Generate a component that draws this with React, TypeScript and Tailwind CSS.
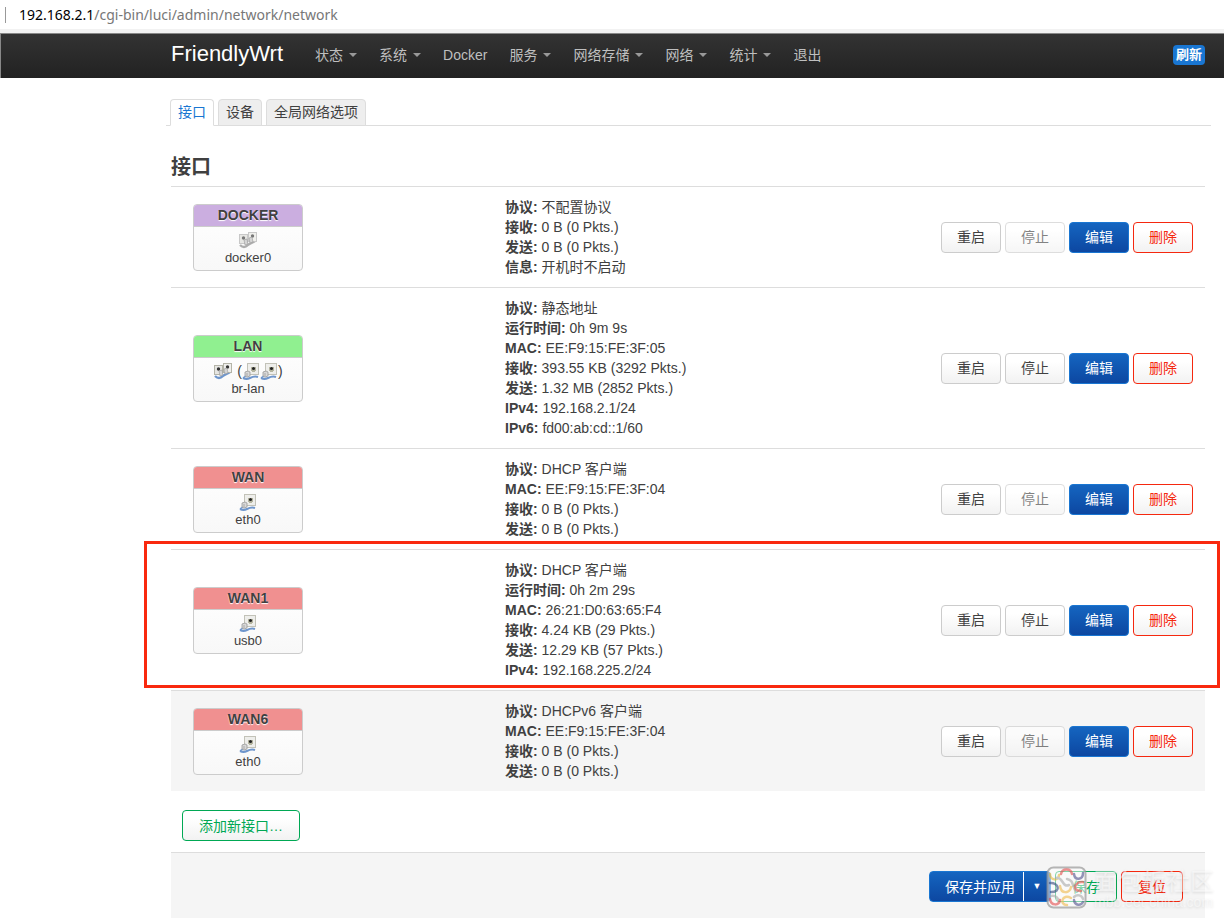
import type { ReactNode } from 'react';
import clsx from 'clsx';

interface Device {
  kind: 'ethernet' | 'bridge';
  disabled?: boolean;
}

interface NetworkInterface {
  name: string;
  device: string;
  zone: 'docker' | 'lan' | 'wan';
  icon: Device;
  members?: Device[];
  canStop: boolean;
  marked?: boolean;
  shaded?: boolean;
  details: [string, string][];
}

const menu = [
  { label: '状态', dropdown: true },
  { label: '系统', dropdown: true },
  { label: 'Docker', dropdown: false },
  { label: '服务', dropdown: true },
  { label: '网络存储', dropdown: true },
  { label: '网络', dropdown: true },
  { label: '统计', dropdown: true },
  { label: '退出', dropdown: false },
];

const tabs = ['接口', '设备', '全局网络选项'];

const interfaces: NetworkInterface[] = [
  {
    name: 'DOCKER',
    device: 'docker0',
    zone: 'docker',
    icon: { kind: 'bridge', disabled: true },
    canStop: false,
    details: [
      ['协议', '不配置协议'],
      ['接收', '0 B (0 Pkts.)'],
      ['发送', '0 B (0 Pkts.)'],
      ['信息', '开机时不启动'],
    ],
  },
  {
    name: 'LAN',
    device: 'br-lan',
    zone: 'lan',
    icon: { kind: 'bridge' },
    members: [{ kind: 'ethernet' }, { kind: 'ethernet' }],
    canStop: true,
    details: [
      ['协议', '静态地址'],
      ['运行时间', '0h 9m 9s'],
      ['MAC', 'EE:F9:15:FE:3F:05'],
      ['接收', '393.55 KB (3292 Pkts.)'],
      ['发送', '1.32 MB (2852 Pkts.)'],
      ['IPv4', '192.168.2.1/24'],
      ['IPv6', 'fd00:ab:cd::1/60'],
    ],
  },
  {
    name: 'WAN',
    device: 'eth0',
    zone: 'wan',
    icon: { kind: 'ethernet' },
    canStop: false,
    details: [
      ['协议', 'DHCP 客户端'],
      ['MAC', 'EE:F9:15:FE:3F:04'],
      ['接收', '0 B (0 Pkts.)'],
      ['发送', '0 B (0 Pkts.)'],
    ],
  },
  {
    name: 'WAN1',
    device: 'usb0',
    zone: 'wan',
    icon: { kind: 'ethernet' },
    canStop: true,
    marked: true,
    details: [
      ['协议', 'DHCP 客户端'],
      ['运行时间', '0h 2m 29s'],
      ['MAC', '26:21:D0:63:65:F4'],
      ['接收', '4.24 KB (29 Pkts.)'],
      ['发送', '12.29 KB (57 Pkts.)'],
      ['IPv4', '192.168.225.2/24'],
    ],
  },
  {
    name: 'WAN6',
    device: 'eth0',
    zone: 'wan',
    icon: { kind: 'ethernet' },
    canStop: false,
    shaded: true,
    details: [
      ['协议', 'DHCPv6 客户端'],
      ['MAC', 'EE:F9:15:FE:3F:04'],
      ['接收', '0 B (0 Pkts.)'],
      ['发送', '0 B (0 Pkts.)'],
    ],
  },
];

const zoneColors = {
  docker: 'bg-[#cbaee0]',
  lan: 'bg-[#90f090]',
  wan: 'bg-[#f09090]',
};

const buttonStyles = {
  neutral: 'border-[#ccc] bg-linear-to-b from-white from-25% to-[#f2f2f2] text-[#404040]',
  primary: 'border-[#1976d2] bg-linear-to-b from-[#1565c0] to-[#0d47a1] text-white',
  negative: 'border-[#f5280f] bg-linear-to-b from-white from-25% to-[#f2f2f2] text-[#f5280f]',
  positive: 'border-[#00a854] bg-linear-to-b from-white from-25% to-[#f2f2f2] text-[#00a854]',
};

function Button({
  kind = 'neutral',
  disabled,
  compact,
  clear,
  children,
}: {
  kind?: keyof typeof buttonStyles;
  disabled?: boolean;
  compact?: boolean;
  clear?: boolean;
  children: ReactNode;
}) {
  return (
    <button
      type="button"
      disabled={disabled}
      className={clsx(
        'h-[31px] rounded border text-sm whitespace-nowrap disabled:opacity-65',
        compact ? 'px-[15px]' : 'px-4',
        buttonStyles[kind],
        clear && 'bg-none',
      )}
    >
      {children}
    </button>
  );
}

function DeviceIcon({ kind, disabled }: Device) {
  const cable = disabled ? '#adadad' : '#6f96cc';
  const shade = disabled ? '#c8c8c8' : '#b4b4a8';

  if (kind === 'bridge') {
    return (
      <svg width="20" height="18" viewBox="0 0 20 18" fill="none" aria-hidden="true">
        <path d="M2 14c3 3 6 2 8 0s4-2 7-4" stroke={cable} strokeWidth="2.4" />
        <rect x="10.5" y="1.5" width="8" height="9" fill="#efefec" stroke={shade} />
        <rect x="1.5" y="3.5" width="8" height="9" fill="#e6e6e3" stroke={shade} />
        <circle cx="14.5" cy="5" r="1.7" fill={disabled ? '#777' : '#333'} />
        <circle cx="5.5" cy="7" r="1.7" fill={disabled ? '#777' : '#333'} />
        <path d="M6 9l3-1 1 5-3 1zM11 7l3-1 1 5-3 1z" fill="#d4d4d4" stroke="#999" strokeWidth=".6" />
      </svg>
    );
  }

  return (
    <svg width="18" height="18" viewBox="0 0 18 18" fill="none" aria-hidden="true">
      <rect x="5.5" y="1.5" width="11" height="11" fill="#eeeeeb" stroke="#c2c2b8" />
      <path d="M9 5h5v4h-1v1h-3V9H9z" fill="#b5b5a0" />
      <circle cx="11.5" cy="6.5" r="1.5" fill="#222" />
      <path d="M1 16c2 1 5 1 7 0s5-2 8-1" stroke={cable} strokeWidth="2" />
      <path d="M1 16l4-3" stroke={cable} strokeWidth="1.5" />
      <path d="M3 10l3-1 2 1v4l-3 1-2-1z" fill="#d8d8d8" stroke="#999" strokeWidth=".8" />
      <path d="M5 11v3" stroke="#999" strokeWidth=".7" />
    </svg>
  );
}

function InterfaceBadge({ iface }: { iface: NetworkInterface }) {
  return (
    <div className="ml-3 w-[110px] overflow-hidden rounded border border-[#ccc] bg-linear-to-b from-white to-[#f8f8f8] text-center">
      <div
        className={clsx(
          'h-[22px] border-b border-[#ccc] text-sm font-bold leading-[21px] [text-shadow:0_1px_1px_white]',
          zoneColors[iface.zone],
        )}
      >
        {iface.name}
      </div>
      <div className="h-[43px] pt-1 text-[13px]">
        <div className="flex h-[18px] items-center justify-center text-sm">
          <DeviceIcon {...iface.icon} />
          {iface.members && (
            <span className="ml-1 flex items-center">
              (
              {iface.members.map((member, i) => (
                <DeviceIcon key={i} {...member} />
              ))}
              )
            </span>
          )}
        </div>
        <div className="leading-[18px]">{iface.device}</div>
      </div>
    </div>
  );
}

function InterfaceRow({ iface }: { iface: NetworkInterface }) {
  return (
    <tr className={clsx('relative border-t border-[#ddd]', iface.shaded && 'bg-[#f5f5f5]')}>
      <td className="w-[324px] p-[10px]">
        <InterfaceBadge iface={iface} />
        {iface.marked && (
          <span className="pointer-events-none absolute -top-[10px] -right-[15px] bottom-[3px] -left-[27px] border-3 border-[#f9290f]" />
        )}
      </td>
      <td className="p-[10px] text-sm leading-5">
        {iface.details.map(([label, value]) => (
          <div key={label}>
            <strong>{label}:</strong> {value}
          </div>
        ))}
      </td>
      <td className="py-[10px] pr-3 pl-[10px]">
        <div className="flex justify-end gap-1">
          <Button compact>重启</Button>
          <Button compact disabled={!iface.canStop}>停止</Button>
          <Button compact kind="primary">编辑</Button>
          <Button compact kind="negative">删除</Button>
        </div>
      </td>
    </tr>
  );
}

function Watermark() {
  return (
    <div className="pointer-events-none absolute top-[13px] -right-[9px] flex items-center gap-1.5">
      <svg width="42" height="44" viewBox="0 0 42 44" fill="none" aria-hidden="true">
        <rect x="1.5" y="1.5" width="38" height="40" rx="6" fill="#fff" fillOpacity=".5" stroke="#999" strokeOpacity=".7" strokeWidth="2" />
        <g strokeWidth="2.5" strokeLinecap="round" opacity=".6">
          <path d="M4 8c0 7 9 7 9 1" stroke="#e8bc3c" />
          <path d="M15 8c1-6 10-6 11 0" stroke="#e34b4b" />
          <path d="M28 8c1 7 9 6 9-1" stroke="#50508c" />
          <path d="M4 17c8-1 12 9 1 9" stroke="#34487c" />
          <path d="M10 12c7-2 6 10 13 7" stroke="#aaa" />
          <path d="M21 13c7 1 5 8 9 12" stroke="#aaa" />
          <path d="M37 16c-8-1-12 9-2 9" stroke="#e34b4b" />
          <path d="M14 20c1 8 10 8 11 1" stroke="#f0b94a" />
          <path d="M5 30c5-1 8 3 8 6" stroke="#aaa" />
          <path d="M4 33c1 7 9 7 10 1" stroke="#e34b4b" />
          <path d="M25 32c-9-5-12 7-4 7" stroke="#f0b94a" />
          <path d="M28 31c3-3 8-2 9 2" stroke="#aaa" />
          <path d="M28 34c1 6 7 6 9 2" stroke="#50508c" />
        </g>
      </svg>
      <div className="text-white/50 [text-shadow:0_1px_3px_rgba(0,0,0,0.12)]">
        <div className="text-2xl leading-7">面包板社区</div>
        <div className="text-sm leading-3">mbb.eet-china.com</div>
      </div>
    </div>
  );
}

export default function App() {
  return (
    <div className="bg-white font-['Liberation_Sans','Noto_Sans_CJK_SC',sans-serif] text-sm text-[#404040]">
      {/* Address bar */}
      <div className="flex h-[29px] items-center pl-[5px] font-['Noto_Sans',sans-serif] text-sm text-[#777]">
        <span className="mr-[13px] h-4 w-px bg-[#999]" />
        <span>
          <span className="text-black">192.168.2.1</span>/cgi-bin/luci/admin/network/network
        </span>
      </div>
      <div className="h-1 bg-[#f2f2f2]" />

      <header className="flex h-[45px] items-center border-t border-l border-[#888] bg-linear-to-b from-[#333] to-[#222] pr-[19px] pb-0.5 pl-[170px] text-[#bfbfbf]">
        <a href="#" className="mr-8 pb-0.5 text-[22px] leading-8 text-white">
          FriendlyWrt
        </a>
        <nav className="flex gap-[22px]">
          {menu.map((item) => (
            <a key={item.label} href="#" className="flex items-center whitespace-nowrap">
              {item.label}
              {item.dropdown && (
                <span className="ml-1.5 border-x-4 border-t-4 border-x-transparent border-t-[#999]" />
              )}
            </a>
          ))}
        </nav>
        <button type="button" className="ml-auto h-5 rounded bg-[#1976d2] px-[3px] text-[13px] leading-5 font-bold text-white">
          刷新
        </button>
      </header>

      <main className="pr-[19px] pl-[171px]">
        <div className="-mr-1.5 -ml-[5px] mt-[21px] flex gap-1 border-b border-[#ddd] pl-1">
          {tabs.map((tab, i) => (
            <a
              key={tab}
              href="#"
              className={clsx(
                '-mb-px h-[27px] rounded-t border px-[7px] leading-[25px]',
                i === 0
                  ? 'border-[#ddd] border-b-white bg-white text-[#1976d2]'
                  : 'border-[#ddd] bg-[#eee]',
              )}
            >
              {tab}
            </a>
          ))}
        </div>

        <h2 className="pt-6 pb-0.5 text-xl leading-[34px] font-bold">接口</h2>

        <table className="w-full border-collapse">
          <tbody>
            {interfaces.map((iface) => (
              <InterfaceRow key={iface.name} iface={iface} />
            ))}
          </tbody>
        </table>

        <div className="flex px-[11px] pt-[19px] pb-[11px]">
          <Button kind="positive">添加新接口…</Button>
        </div>

        <footer className="relative flex justify-end gap-1 border-t border-[#ddd] bg-[#f5f5f5] pt-[18px] pr-[22px] pb-4">
          <div className="flex h-[31px] overflow-hidden rounded border border-[#1976d2] bg-linear-to-b from-[#1565c0] to-[#0d47a1] text-white">
            <button type="button" className="border-r border-white pr-2 pl-[15px]">
              保存并应用
            </button>
            <button type="button" aria-label="更多" className="w-[26px] text-[9px]">
              ▼
            </button>
          </div>
          <Button kind="positive" clear>保存</Button>
          <Button kind="negative" clear>复位</Button>
          <Watermark />
        </footer>
      </main>
    </div>
  );
}
